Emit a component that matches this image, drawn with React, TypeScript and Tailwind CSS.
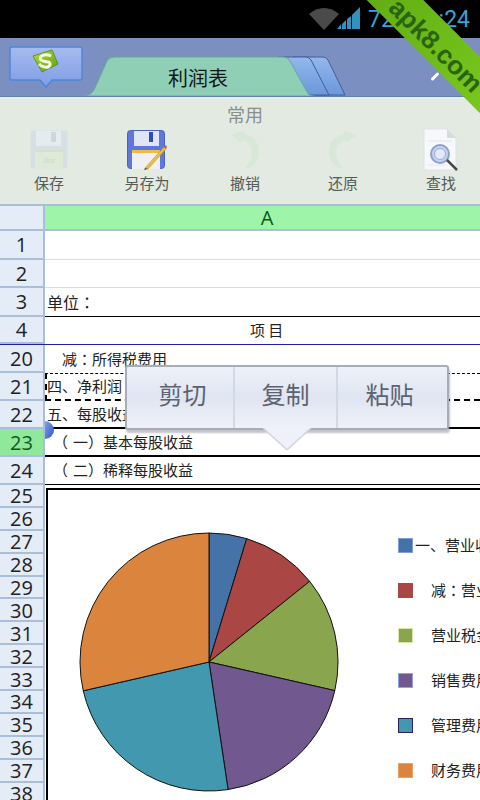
import type { ReactNode } from 'react';

const cjk = "font-['Noto_Sans_CJK_SC','Noto_Sans',sans-serif]";

function Floppy({ faded }: { faded?: boolean }) {
  if (faded) {
    return (
      <svg width="38" height="40" viewBox="0 0 38 40">
        <rect x="0.5" y="0.5" width="37" height="38" rx="3" fill="#d6e0e4" />
        <rect x="6" y="1" width="25" height="15" fill="#e6ebee" />
        <rect x="21" y="2" width="5" height="10" fill="#cdd7de" />
        <rect x="5" y="20" width="28" height="19" fill="#dfe9da" />
        <rect x="5" y="20" width="28" height="2" fill="#d5e0ce" />
        <text x="19" y="33" fontSize="7" textAnchor="middle" fill="#cbd9c4" fontStyle="italic">
          Doc
        </text>
      </svg>
    );
  }
  return (
    <svg width="40" height="40" viewBox="0 0 40 40">
      <rect x="0.5" y="0.5" width="37" height="38" rx="3" fill="#5d78d8" stroke="#4a63bd" />
      <rect x="7" y="1" width="25" height="15" fill="#dfe4f6" />
      <rect x="22" y="2" width="4" height="10" fill="#2d4fb0" />
      <rect x="5" y="20" width="28" height="19" fill="#eef0f4" />
      <rect x="5" y="20" width="28" height="3" fill="#f2b84e" />
      <path d="M18 38 L37 17 L39 19 L21 39 Z" fill="#eebd3c" stroke="#b58a22" strokeWidth="0.5" />
      <path d="M37 17 L39 15 L40 17 L39 19 Z" fill="#d05a5a" />
      <path d="M18 38 L21 39 L17 40 Z" fill="#444" />
    </svg>
  );
}

function Arrow({ flip }: { flip?: boolean }) {
  return (
    <svg width="32" height="40" viewBox="0 0 32 40" className={flip ? '-scale-x-100' : ''}>
      <path
        d="M2 5 L16 0 L15 4 C25 5 31 14 30 24 C29 32 23 38 15 39 C22 33 24 24 22 18 C20 13 17 11 14 10 L13 13 Z"
        fill="#d8e8d6"
      />
    </svg>
  );
}

function FindIcon() {
  return (
    <svg width="36" height="44" viewBox="0 0 36 44">
      <path d="M1 1 L24 1 L33 10 L33 42 L1 42 Z" fill="#f6f8fb" stroke="#dfe3e8" />
      <path d="M24 1 L24 10 L33 10 Z" fill="#d6dbe0" />
      <path d="M5 13 H29 M5 37 H22" stroke="#e1e4e9" />
      <circle cx="17" cy="26" r="9" fill="#c4d2f0" stroke="#8ea3c8" strokeWidth="2" />
      <circle cx="17" cy="26" r="5.5" fill="#e2e9f7" stroke="#9db0d2" />
      <path d="M24 32 L34 42" stroke="#4a4a4a" strokeWidth="2.5" />
    </svg>
  );
}

const tools: { label: string; icon: ReactNode }[] = [
  { label: '保存', icon: <Floppy faded /> },
  { label: '另存为', icon: <Floppy /> },
  { label: '撤销', icon: <Arrow /> },
  { label: '还原', icon: <Arrow flip /> },
  { label: '查找', icon: <FindIcon /> },
];

// the colon sits centred in the cell text, the JP cut draws it that way
function Colon() {
  return <span className="font-['Noto_Sans_CJK_JP',sans-serif]">：</span>;
}

// opening bracket sits further left than the font puts it
function Paren({ children }: { children: ReactNode }) {
  return (
    <>
      <span className="ml-[-5px] mr-[5px]">（</span>
      {children}）
    </>
  );
}

function RowNum({ n, active, h }: { n: number; active?: boolean; h: string }) {
  return (
    <div
      className={`${h} w-[45px] shrink-0 pt-[2px] flex items-center justify-center border-r-2 border-b-2 border-[#a9bfd9] text-[20px] leading-none font-['Open_Sans',sans-serif] ${
        active ? 'bg-[#90e89a] text-[#0b5a1a]' : 'bg-[#e4ecf7] text-[#222]'
      }`}
    >
      {n}
    </div>
  );
}

function Row({
  n,
  active,
  h = 'h-[28px]',
  line,
  children,
}: {
  n: number;
  active?: boolean;
  h?: string;
  line: string;
  children?: ReactNode;
}) {
  return (
    <div className="flex">
      <RowNum n={n} active={active} h={h} />
      <div className={`${h} flex-1 flex items-center text-[15px] text-[#222] ${cjk} ${line}`}>{children}</div>
    </div>
  );
}

// start from 12 o'clock, clockwise, in degrees
const slices = [
  { from: 0, to: 17, fill: '#4572a7' },
  { from: 17, to: 51.3, fill: '#aa4643' },
  { from: 51.3, to: 102.8, fill: '#89a54e' },
  { from: 102.8, to: 171.5, fill: '#71588f' },
  { from: 171.5, to: 257.1, fill: '#4198af' },
  { from: 257.1, to: 360, fill: '#db843d' },
];

function slicePath(from: number, to: number) {
  const r = 129;
  const pt = (a: number) => {
    const rad = (a * Math.PI) / 180;
    return `${(130 + r * Math.sin(rad)).toFixed(2)} ${(130 - r * Math.cos(rad)).toFixed(2)}`;
  };
  return `M130 130 L${pt(from)} A${r} ${r} 0 ${to - from > 180 ? 1 : 0} 1 ${pt(to)} Z`;
}

const legend: { label: ReactNode; key: string; fill: string; border: string; pad: string }[] = [
  { key: 'a', label: '一、营业收入', fill: '#4572a7', border: '#7d9fd8', pad: 'ml-[2px]' },
  { key: 'b', label: <>减<Colon />营业成本</>, fill: '#aa4643', border: '#aa4643', pad: 'ml-[18px]' },
  { key: 'c', label: '营业税金及附加', fill: '#89a54e', border: '#d8e8a0', pad: 'ml-[18px]' },
  { key: 'd', label: '销售费用', fill: '#71588f', border: '#8fa4e0', pad: 'ml-[18px]' },
  { key: 'e', label: '管理费用', fill: '#4198af', border: '#2b1f66', pad: 'ml-[18px]' },
  { key: 'f', label: '财务费用', fill: '#db843d', border: '#eea060', pad: 'ml-[18px]' },
];

const chartRows = [25, 26, 27, 28, 29, 30, 31, 32, 33, 34, 35, 36, 37, 38];

export default function App() {
  return (
    <div className="relative w-[480px] h-[800px] overflow-hidden bg-white font-['Noto_Sans_CJK_SC',sans-serif]">
      {/* status bar */}
      <div className="h-[38px] bg-black flex items-center justify-end pr-[10px] gap-[8px]">
        <svg width="52" height="24" viewBox="0 0 52 24" className="mr-[-1px]">
          <path d="M0 7 C9 -1 21 -1 30 7 L15 23 Z" fill="#4a4a4a" />
          <path d="M28 22 L32 22 L32 17 Z M33 22 L37 22 L37 13 L33 17 Z M38 22 L42 22 L42 9 L38 12 Z M43 22 L51 22 L51 0 L43 8 Z" fill="#2f93bd" />
        </svg>
        <div className="w-[102px] flex justify-between text-[23px] leading-none text-[#33a5d8] font-['Roboto',sans-serif]">
          <span>72</span>
          <span>:24</span>
        </div>
      </div>

      {/* title bar with tabs */}
      <div className="h-[59px] bg-[#7b90c0] flex items-end relative border-b border-[#6a7fa8]">
        <div className="ml-[9px] mb-[8px] w-[74px] h-[42px] shrink-0">
          <svg width="74" height="42" viewBox="0 0 74 42">
            <defs>
              <linearGradient id="btn" x1="0" y1="0" x2="0" y2="1">
                <stop offset="0" stopColor="#a6bbee" />
                <stop offset="1" stopColor="#7f9de6" />
              </linearGradient>
              <linearGradient id="logo" x1="0" y1="0" x2="1" y2="1">
                <stop offset="0" stopColor="#b5e02e" />
                <stop offset="1" stopColor="#5f9e14" />
              </linearGradient>
            </defs>
            <path
              d="M3 1 H71 Q73 1 73 3 V32 Q73 34 71 34 H43 L37 41 L31 34 H3 Q1 34 1 32 V3 Q1 1 3 1 Z"
              fill="url(#btn)"
              stroke="#4f86dc"
              strokeWidth="1.5"
            />
            <path d="M24 10 L43 4 L49 18 L33 26 Z" fill="url(#logo)" stroke="#4f8a12" strokeWidth="0.8" />
            <path d="M42 10 C36 7 29 10 32 14 C35 17 42 14 41 19 C39 23 33 21 30 18" fill="none" stroke="#f4fbe4" strokeWidth="3" />
          </svg>
        </div>
        <div className="relative w-[265px] h-[41px] shrink-0">
          <svg width="265" height="41" viewBox="0 0 265 41" className="block">
            <defs>
              <linearGradient id="back" x1="0" y1="0" x2="0" y2="1">
                <stop offset="0" stopColor="#93b8ec" />
                <stop offset="1" stopColor="#6b97dc" />
              </linearGradient>
            </defs>
            <path d="M210 2 H240 Q243 2 245 5 L262 40 H232 Z" fill="url(#back)" stroke="#3f5f96" />
            <path d="M195 2 H223 Q226 2 228 5 L246 40 H216 Z" fill="url(#back)" stroke="#3f5f96" />
            <path
              d="M2 41 Q8 40 11 35 L24 6 Q26 2 31 2 H200 Q205 2 207 6 L224 37 Q226 41 230 41 Z"
              fill="#8ecfb6"
              stroke="#6aa896"
            />
          </svg>
          <span className={`absolute left-[85px] top-[9px] text-[20px] leading-[28px] text-[#161616] ${cjk}`}>
            利润表
          </span>
        </div>
        <div className="absolute left-[430px] top-[37px] w-[10px] h-[3px] rounded-full bg-white -rotate-45" />
      </div>

      {/* common tools */}
      <div className="h-[107px] bg-[#e2eae2] border-t-2 border-[#dcf2ea] overflow-hidden">
        <div className={`h-[30px] pl-[227px] text-[18px] leading-[30px] text-[#8a8f8c] ${cjk}`}>常用</div>
        <div className="flex">
          {tools.map((t) => (
            <div key={t.label} className="w-[98px] shrink-0 flex flex-col items-center">
              <div className="h-[41px] flex items-center justify-center">{t.icon}</div>
              <div className={`mt-[2px] text-[15px] leading-[22px] text-[#555a58] ${cjk}`}>{t.label}</div>
            </div>
          ))}
        </div>
      </div>

      {/* column header */}
      <div className="flex h-[27px] border-y-2 border-[#a9bfd9]">
        <div className="w-[45px] shrink-0 bg-[#e4ecf7] border-r-2 border-[#a9bfd9]" />
        <div className="flex-1 pl-[9px] bg-[#9ef4a8] text-[#0b5a1a] text-[20px] leading-[23px] text-center font-['Open_Sans',sans-serif]">
          A
        </div>
      </div>

      {/* sheet rows */}
      <Row n={1} h="h-[28.5px]" line="border-b border-[#dcdcdc]" />
      <Row n={2} h="h-[28.5px]" line="border-b border-[#dcdcdc]" />
      <Row n={3} h="h-[28.5px]" line="border-b border-black">
        <span className="pl-[2px] text-[16px]">
          单位
          <Colon />
        </span>
      </Row>
      <div className="flex border-b border-[#2020a0]">
        <RowNum n={4} h="h-[27.5px]" />
        <div className={`flex-1 pl-[205px] text-[15px] leading-[26px] text-[#222] ${cjk}`}>项 目</div>
      </div>
      <Row n={20} line="border-b-0">
        <span className="pl-[17px]">
          减
          <Colon />
          所得税费用
        </span>
      </Row>
      <Row n={21} line="border-t border-b-2 border-l-2 border-dashed border-black">
        <span>四、净利润</span>
      </Row>
      <Row n={22} line="border-b-2 border-black">
        <span className="pl-[2px]">五、每股收益</span>
      </Row>
      <Row n={23} active line="border-b-2 border-black">
        <span className="pl-[13px]">
          <Paren>一</Paren>基本每股收益
        </span>
      </Row>
      <Row n={24} line="border-b border-black">
        <span className="pl-[13px]">
          <Paren>二</Paren>稀释每股收益
        </span>
      </Row>

      {/* chart rows */}
      <div className="flex">
        <div className="w-[45px] shrink-0">
          {chartRows.map((n) => (
            <RowNum key={n} n={n} h="h-[22.9px]" />
          ))}
        </div>
        <div className="flex-1 h-[320px] pt-[3px] pl-[1px]">
          <div className="h-full border-t-2 border-l-2 border-black flex pl-[31px] pt-[42px] overflow-hidden">
            <svg width="260" height="260" viewBox="0 0 260 260" className="shrink-0">
              {slices.map((s) => (
                <path key={s.fill} d={slicePath(s.from, s.to)} fill={s.fill} stroke="#111" strokeWidth="1" />
              ))}
            </svg>
            <div className={`ml-[59px] flex flex-col gap-[30px] pt-[6px] whitespace-nowrap ${cjk}`}>
              {legend.map((l) => (
                <div key={l.key} className="flex items-center h-[15px] text-[15px] text-[#222]">
                  <div className="w-[15px] h-[15px] shrink-0 border" style={{ background: l.fill, borderColor: l.border }} />
                  <span className={l.pad}>{l.label}</span>
                </div>
              ))}
            </div>
          </div>
        </div>
      </div>

      {/* selection handle */}
      <div className="absolute left-[45px] top-[421px] w-[9px] h-[18px] rounded-r-full bg-gradient-to-br from-[#7fa0ee] to-[#2f55c0]" />

      {/* cut / copy / paste popup */}
      <div className="absolute left-[125px] top-[365px] w-[324px] h-[65px] flex px-[5px] rounded-[3px] border-2 border-[#a6acb9] bg-gradient-to-b from-[#eef1f9] via-[#dfe5f1] to-[#eff1f9] shadow-[1px_3px_2px_rgba(120,125,140,0.45)]">
        {['剪切', '复制', '粘贴'].map((t, i) => (
          <div
            key={t}
            className={`w-[103px] shrink-0 pb-[8px] flex items-center justify-center text-[24px] text-[#5c6272] ${cjk} ${
              i < 2 ? 'border-r-2 border-[#d2d8e4]' : ''
            }`}
          >
            {t}
          </div>
        ))}
      </div>
      <svg width="50" height="23" viewBox="0 0 50 23" className="absolute left-[262px] top-[428px]">
        <path d="M1 0 L24 21 Q25 22 26 21 L49 0 Z" fill="#eef1f9" />
        <path d="M1 0 L24 21 Q25 22 26 21 L49 0" fill="none" stroke="#d0d4dc" strokeWidth="1.5" />
      </svg>

      {/* apk8 watermark */}
      <div className="absolute left-[306px] top-[21px] w-[260px] h-[40px] pt-[6px] pl-[6px] rotate-45 bg-gradient-to-r from-[#5ba512] to-[#7fd020] flex items-center justify-center text-[26px] leading-none text-[#2a6410] font-['Liberation_Sans',sans-serif] font-bold">
        apk8.com
      </div>
    </div>
  );
}
